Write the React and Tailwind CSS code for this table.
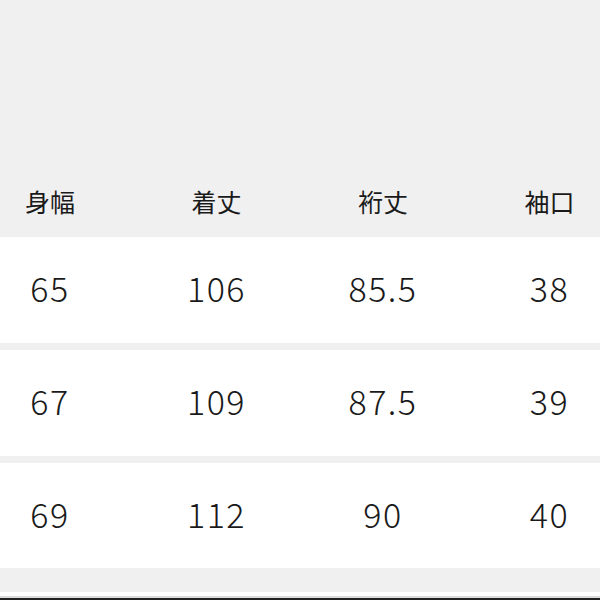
const HEADERS = ['身幅', '着丈', '裄丈', '袖口']

const ROWS = [
  ['65', '106', '85.5', '38'],
  ['67', '109', '87.5', '39'],
  ['69', '112', '90', '40'],
]

const font = { fontFamily: '"Noto Sans CJK JP", "Noto Sans", sans-serif' }

function Row({ cells, className }) {
  return (
    <div className={`grid grid-cols-[100px_100px_100px_100px] gap-x-[66.5px] items-center ${className}`}>
      {cells.map((c, i) => (
        <div key={i} className="text-center">{c}</div>
      ))}
    </div>
  )
}

export default function App() {
  return (
    <div className="w-[600px] h-[600px] bg-[#f0f0f0] flex flex-col text-[#1a1a1a] overflow-hidden" style={font}>
      <div className="h-[170px] shrink-0" />
      <Row cells={HEADERS} className="h-[67px] shrink-0 text-[25px] leading-none pb-[4px]" />
      <div className="flex flex-col gap-[7px] shrink-0">
        {ROWS.map((r, i) => (
          <Row
            key={i}
            cells={r}
            className={`bg-white text-[34px] leading-none font-light tracking-[1.5px] pb-[4px] ${i === 2 ? 'h-[105px]' : 'h-[106px]'}`}
          />
        ))}
      </div>
      <div className="h-[24px] shrink-0" />
      <div className="h-[4px] bg-white shrink-0" />
      <div className="h-[2px] bg-[#dcdcdc] shrink-0" />
      <div className="flex-1 bg-[#222]" />
    </div>
  )
}
